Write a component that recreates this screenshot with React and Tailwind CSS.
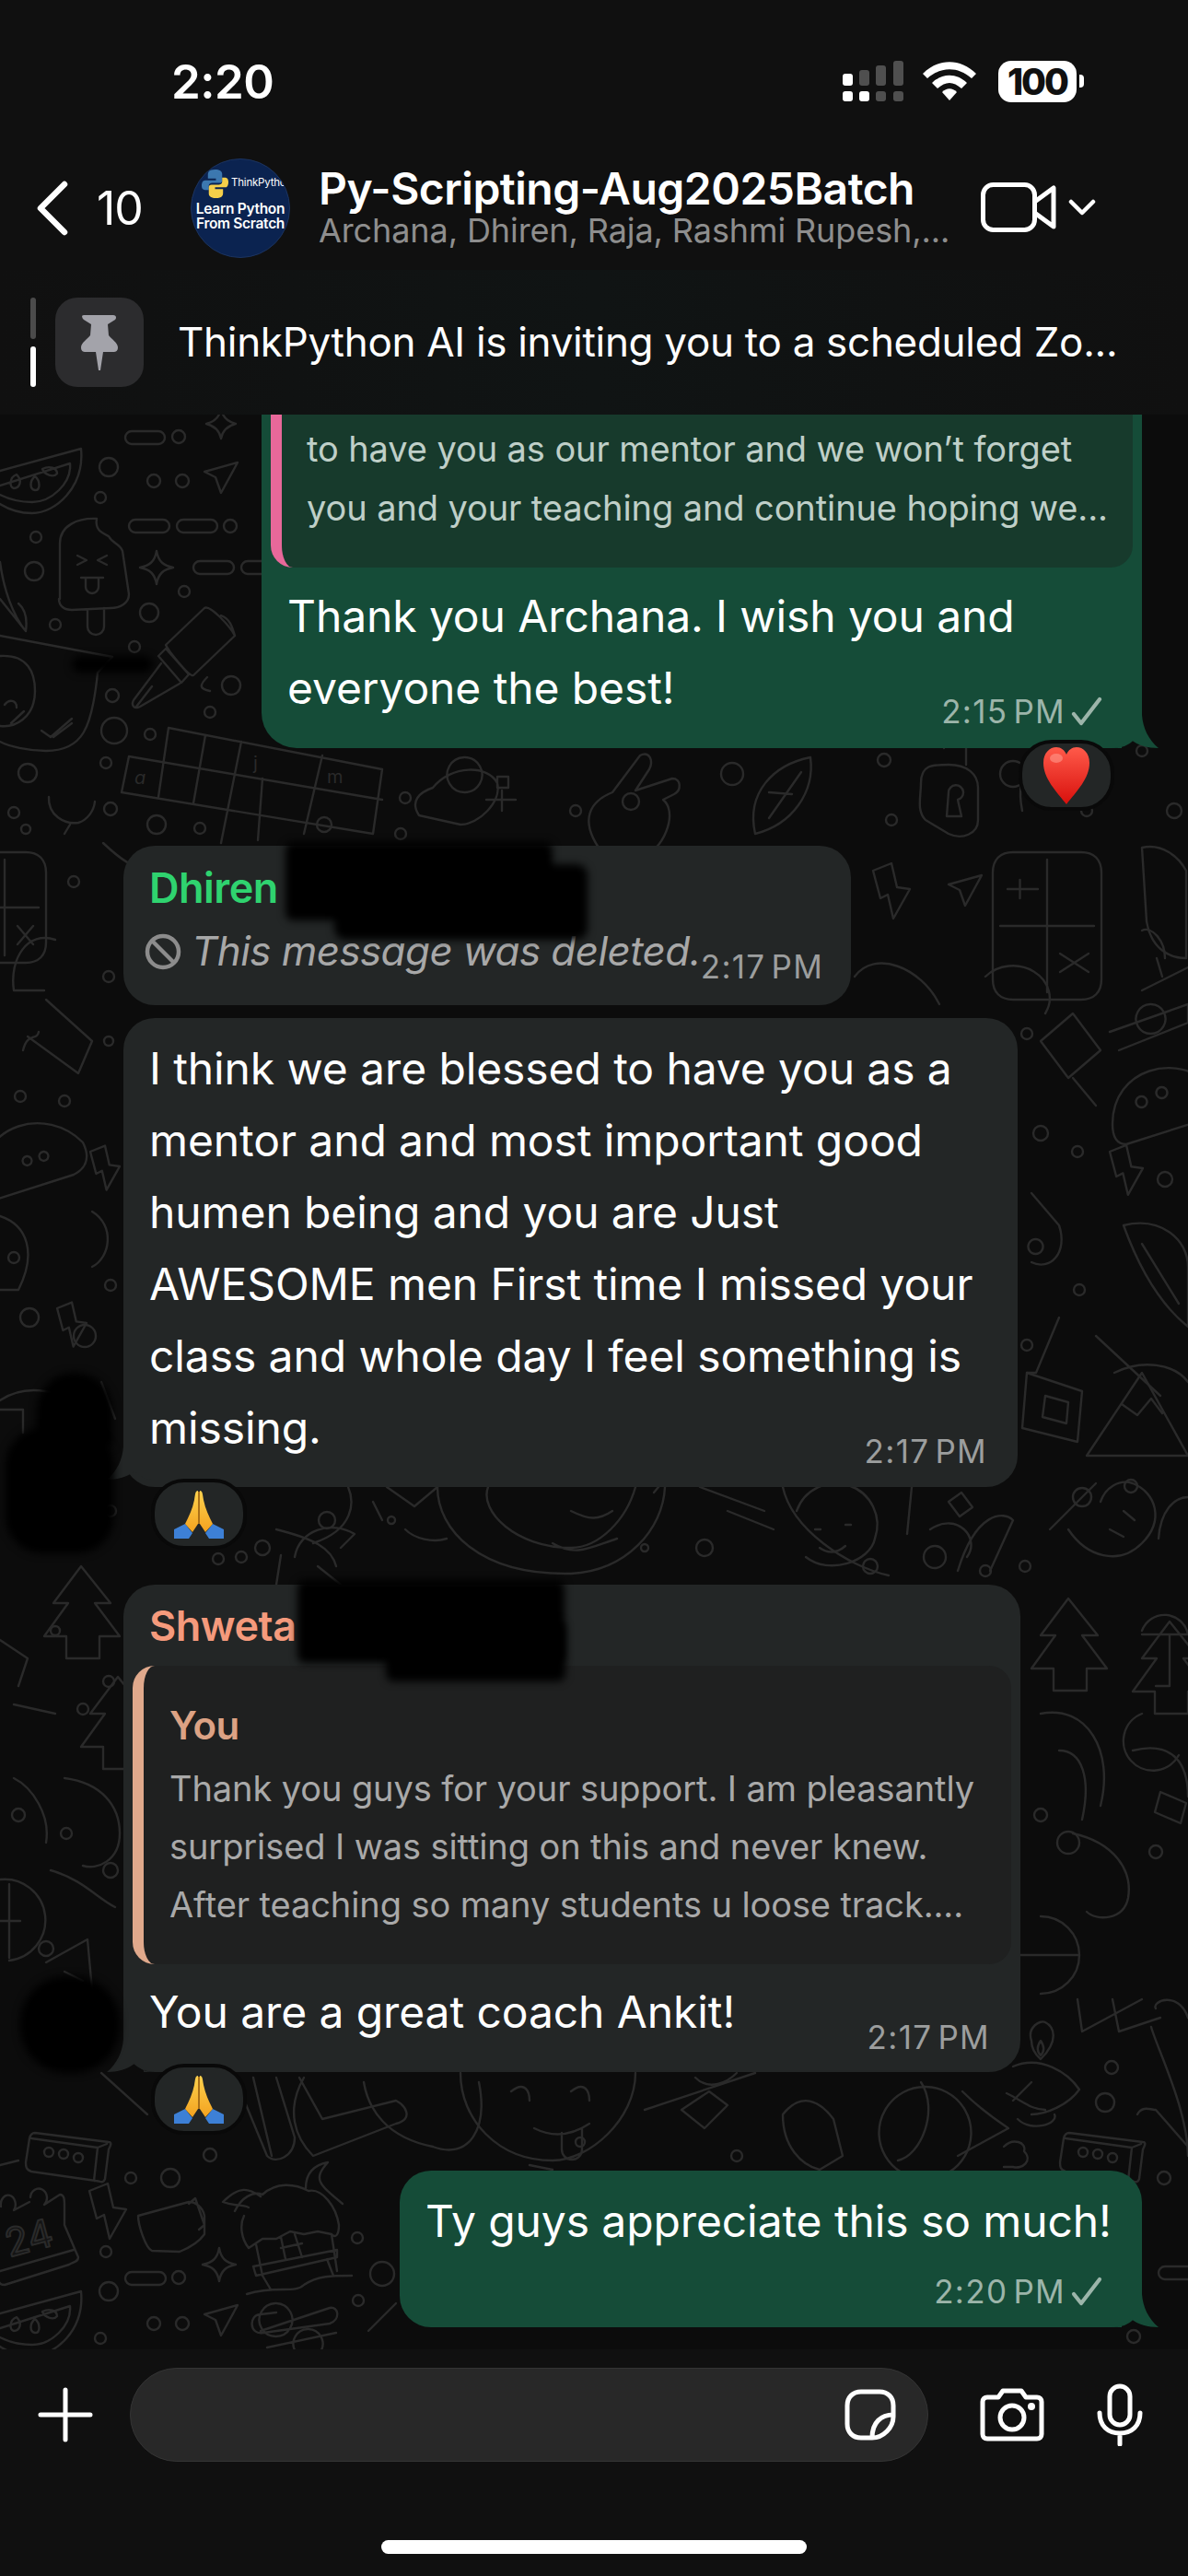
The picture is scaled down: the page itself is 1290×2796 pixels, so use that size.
import React from "react";

const melon = (x, y) => `M${x} ${y + 24} L${x + 88} ${y} C${x + 92} ${y + 42} ${x + 60} ${y + 70} ${x + 35} ${y + 70} C${x + 20} ${y + 70} ${x + 8} ${y + 65} ${x} ${y + 60} M${x} ${y + 40} L${x + 76} ${y + 16} C${x + 78} ${y + 38} ${x + 55} ${y + 58} ${x + 35} ${y + 58} C${x + 20} ${y + 58} ${x + 8} ${y + 54} ${x} ${y + 50} M${x + 18} ${y + 28} c-8 3 -8 14 -3 15 c6 0 10 -8 3 -15z M${x + 38} ${y + 30} c-6 5 -6 14 0 15 c6 0 6 -10 0 -15z M${x + 46} ${y + 22} c2 6 12 10 16 5 c0 -6 -8 -9 -16 -5z`;
const send = (x, y) => `M${x} ${y + 10} L${x + 36} ${y} L${x + 18} ${y + 33} L${x + 12} ${y + 16}Z`;
const spark = (x, y, r = 18) => `M${x} ${y - r} C${x + 2} ${y - 6} ${x + 8} ${y - 2} ${x + r} ${y} C${x + 8} ${y + 2} ${x + 2} ${y + 6} ${x} ${y + r} C${x - 2} ${y + 6} ${x - 8} ${y + 2} ${x - r} ${y} C${x - 8} ${y - 2} ${x - 2} ${y - 6} ${x} ${y - r}Z`;
const bolt = (x, y, s = 1) => `M${x} ${y} L${x + 20 * s} ${y - 8 * s} L${x + 26 * s} ${y + 18 * s} L${x + 40 * s} ${y + 20 * s} L${x + 22 * s} ${y + 52 * s} L${x + 16 * s} ${y + 26 * s} L${x + 8 * s} ${y + 30 * s}Z`;
const dots = (x, y) => `M${x + 8} ${y} L${x + 88} ${y + 10} C${x + 92} ${y + 10} ${x + 90} ${y + 14} ${x + 88} ${y + 18} L${x + 84} ${y + 50} C${x + 82} ${y + 56} ${x + 78} ${y + 52} ${x + 74} ${y + 52} L${x + 4} ${y + 42} C${x - 2} ${y + 40} ${x - 2} ${y + 36} ${x - 2} ${y + 32} L${x + 2} ${y + 6} C${x + 3} ${y + 2} ${x + 5} ${y} ${x + 8} ${y}Z M${x + 86} ${y + 12} L${x + 76} ${y + 16} L${x + 4} ${y + 6} M${x + 76} ${y + 16} L${x + 72} ${y + 52}`;
const taco = (x, y) => `M${x} ${y + 70} C${x} ${y + 10} ${x + 70} ${y - 10} ${x + 110} ${y + 30} C${x + 120} ${y + 50} ${x + 110} ${y + 60} ${x + 100} ${y + 65} L${x + 15} ${y + 92} C${x + 5} ${y + 92} ${x} ${y + 85} ${x} ${y + 70}Z`;
const mtn = (x, y) => `M${x} ${y + 90} L${x + 60} ${y} L${x + 110} ${y + 90}Z M${x + 38} ${y + 34} L${x + 55} ${y + 46} L${x + 70} ${y + 28} L${x + 82} ${y + 44}`;
const tree = (x, y) => `M${x + 40} ${y} L${x + 72} ${y + 40} L${x + 55} ${y + 40} L${x + 82} ${y + 76} L${x + 60} ${y + 76} L${x + 60} ${y + 100} L${x + 24} ${y + 100} L${x + 24} ${y + 76} L${x} ${y + 76} L${x + 26} ${y + 40} L${x + 10} ${y + 40}Z`;
const hand = (x, y) => `M${x + 10} ${y + 100} C${x - 10} ${y + 70} ${x} ${y + 50} ${x + 25} ${y + 40} L${x + 55} ${y} C${x + 65} ${y - 5} ${x + 70} ${y + 5} ${x + 65} ${y + 15} L${x + 50} ${y + 38} L${x + 90} ${y + 25} C${x + 100} ${y + 25} ${x + 100} ${y + 38} ${x + 92} ${y + 42} L${x + 80} ${y + 48} C${x + 95} ${y + 60} ${x + 85} ${y + 95} ${x + 60} ${y + 110} C${x + 40} ${y + 118} ${x + 22} ${y + 115} ${x + 10} ${y + 100}Z`;
const calc = (x, y, w, h) => `M${x + 22} ${y} H${x + w - 22} C${x + w - 8} ${y} ${x + w} ${y + 8} ${x + w} ${y + 22} V${y + h - 22} C${x + w} ${y + h - 8} ${x + w - 8} ${y + h} ${x + w - 22} ${y + h} H${x + 22} C${x + 8} ${y + h} ${x} ${y + h - 8} ${x} ${y + h - 22} V${y + 22} C${x} ${y + 8} ${x + 8} ${y} ${x + 22} ${y}Z M${x + 8} ${y + h / 2} H${x + w - 8} M${x + w / 2} ${y + 8} V${y + h - 8} M${x + 16} ${y + h / 4} H${x + w / 2 - 10} M${x + w / 4} ${y + h / 4 - 10} V${y + h / 4 + 10} M${x + w / 2 + 14} ${y + (h * 3) / 4 - 10} L${x + w - 14} ${y + (h * 3) / 4 + 10} M${x + w - 14} ${y + (h * 3) / 4 - 10} L${x + w / 2 + 14} ${y + (h * 3) / 4 + 10}`;

const PATHS = [
  melon(0, 487),
  send(222, 502),
  spark(170, 616), spark(240, 460, 16),
  "M65 650 V590 C65 570 85 562 105 563 C103 575 110 578 118 582 C122 590 130 590 133 598 L140 645 C140 655 130 660 120 660 L78 662 C70 662 64 658 64 650Z M95 662 V680 a9 9 0 0 0 18 0 V660 M84 603 L94 608 L84 613 M116 603 L106 608 L116 613 M88 627 H112 M93 627 v10 a7 7 0 0 0 14 0 v-10",
  "M0 610 C4 640 14 668 28 685 C30 670 26 660 20 655 M0 650 L28 685",
  "M180 700 L222 660 C228 656 250 680 255 690 L210 733 C205 735 182 705 180 700Z M172 712 L180 704 L205 732 L197 741Z M175 720 L145 760 C142 766 146 770 152 767 L195 742 M148 767 L165 745 M240 668 C250 672 252 680 255 690 M225 735 C215 745 218 748 228 750",
  "M0 690 L122 713 L106 730 C100 790 90 815 50 815 C30 815 10 810 0 805 M0 712 C30 710 38 730 38 750 C38 780 15 790 0 788 M45 793 L55 800 L78 780 M58 800 L78 785 M5 765 C10 758 18 760 18 768 M12 785 L26 772",
  "M183 790 L415 835 M140 821 L415 868 M132 860 L405 905 M140 821 L132 860 M183 790 L172 865 M223 798 L210 872 M262 805 L240 915 M285 845 L280 912 M350 820 L330 905 M415 835 L405 905",
  "M53 865 C52 885 70 895 85 893 C95 890 102 880 103 870 M76 895 L70 905",
  "M112 915 C128 930 145 945 170 945",
  "M470 855 C490 830 530 830 540 850 C545 870 520 895 500 895 L455 885 C445 870 455 860 470 855Z M505 822 a19 19 0 1 1 -1 0 M540 855 H552 V843 H540 Z M528 868 H560 M545 858 V880",
  hand(640, 820),
  "M820 905 C810 860 840 830 880 822 C885 860 860 895 820 905Z M835 888 L870 838 M835 860 L860 862",
  "M1000 850 C1000 830 1012 830 1030 830 C1050 830 1062 840 1062 855 V890 C1062 905 1045 912 1030 905 L1005 890 C995 880 1000 865 1000 850Z M1025 812 a12 12 0 0 1 24 0 V830 M1030 860 a8 8 0 1 1 10 8 l4 18 h-16 z",
  "M1110 880 C1100 830 1130 815 1165 820",
  bolt(948, 945), send(1030, 950),
  calc(1078, 925, 118, 160),
  "M1240 920 C1262 915 1280 930 1288 945 V1040 C1270 1040 1250 1030 1245 1000Z",
  "M1240 1010 C1250 1005 1265 1020 1265 1040 M1256 1040 L1262 1060",
  "M928 1060 C950 1030 1000 1050 1020 1090 M1070 1060 a40 35 0 0 1 65 40",
  "M1240 1075 L1290 1050 M1250 1090 a16 16 0 1 1 -1 0",
  calc(-40, 925, 90, 120),
  "M60 1020 C30 1010 10 1040 15 1075 M15 1075 H48",
  "M50 1085 L100 1130 L85 1165 L30 1125 M25 1140 C30 1120 40 1130 42 1120",
  taco(-20, 1210), "M30 1255 a5 5 0 1 1 -1 0 M48 1250 a5 5 0 1 1 -1 0",
  bolt(98, 1250, 0.8), "M100 1315 C125 1330 120 1365 100 1375",
  bolt(62, 1420, 0.8),
  "M0 1320 C30 1330 40 1360 20 1400 L-5 1400",
  "M0 1520 C30 1500 70 1510 90 1530 M0 1530 H25 V1555 M110 1500 L125 1540",
  tree(48, 1700), tree(88, 1820),
  "M0 1780 L30 1800 L20 1830 M15 1850 L60 1860",
  "M70 1930 C110 1935 130 1960 130 1990 C130 2020 105 2030 90 2025 M15 1930 C35 1940 55 1970 50 2000 M55 2030 C90 2040 105 2060 125 2070",
  "M0 2040 a44 44 0 0 1 10 88 M-5 2085 H22 M10 2045 V2125",
  "M50 2130 L95 2105 L100 2160 M70 2140 L90 2150",
  taco(1208, 1150), "M1240 1190 a6 6 0 1 1 -1 0 M1262 1180 a6 6 0 1 1 -1 0",
  "M1130 1130 L1165 1100 L1195 1140 L1160 1170Z M1165 1170 L1190 1200",
  bolt(1205, 1250, 0.9),
  "M1205 1120 L1290 1090 L1290 1110 L1215 1140",
  "M1120 1295 L1150 1330 C1160 1360 1140 1380 1120 1370 M1125 1345 a8 8 0 1 1 -1 0",
  "M1220 1330 C1260 1320 1290 1345 1290 1375 V1440 C1265 1420 1240 1385 1220 1330Z M1240 1350 L1280 1415",
  "M1210 1490 C1240 1475 1275 1480 1290 1500 M1150 1430 L1125 1490 H1115 M1190 1450 L1260 1515",
  mtn(1180, 1490),
  "M1115 1490 L1175 1510 L1170 1565 L1110 1550Z M1135 1515 L1160 1522 L1158 1545 L1132 1538Z",
  "M1140 1660 L1190 1610 M1160 1660 C1180 1690 1215 1700 1240 1675 C1265 1650 1255 1620 1230 1610 C1215 1605 1200 1615 1195 1630",
  "M1258 1670 C1260 1640 1275 1625 1290 1625 M1220 1640 L1232 1650 M1205 1660 L1220 1668",
  tree(1120, 1735), tree(1230, 1760),
  "M1240 1770 a26 26 0 0 1 50 4 H1240 M1270 1775 L1270 1830 H1255",
  "M1130 1860 C1180 1850 1210 1900 1195 1960 M1150 1900 C1175 1900 1185 1930 1175 1975 M1240 1860 a32 32 0 1 0 40 45",
  "M1230 1900 C1270 1890 1290 1910 1290 1950 M1165 1990 C1210 2000 1230 2030 1225 2060 C1220 2085 1190 2085 1180 2075",
  "M1260 1945 l28 12 l-6 22 l-28 -12z",
  "M1130 2080 a42 42 0 1 1 0 84 M1090 2122 H1170",
  "M1170 2170 L1175 2205 L1240 2170 M1208 2170 L1215 2205 L1260 2190",
  "M1120 2215 C1115 2200 1130 2192 1135 2195 C1145 2200 1150 2215 1130 2235 C1122 2228 1120 2222 1120 2215Z M1130 2215 c-4 6 -4 12 0 16 c4 -4 4 -10 0 -16z M1100 2243 C1130 2230 1160 2250 1172 2268 C1160 2285 1135 2295 1120 2295 M1105 2300 C1120 2315 1150 2305 1145 2295 M1093 2272 C1110 2280 1120 2290 1135 2290",
  "M1255 2180 C1250 2172 1280 2160 1290 2190 M1250 2200 C1255 2220 1290 2290 1290 2340 M1235 2295 C1240 2285 1250 2290 1255 2290 L1290 2330",
  dots(1153, 2315),
  "M1090 2330 C1100 2320 1115 2325 1112 2335 C1122 2345 1110 2355 1100 2352 H1090",
  "M378 1614 C385 1630 385 1660 340 1675 M300 1660 C340 1670 360 1680 365 1700 M475 1614 C475 1660 520 1710 620 1708 C680 1705 720 1660 722 1614 M530 1614 C520 1640 560 1680 620 1680 C650 1680 680 1650 690 1614 M405 1630 L415 1650 M440 1660 C450 1670 470 1675 485 1670 M620 1640 C640 1650 650 1650 665 1640 M600 1675 C625 1690 640 1680 670 1670",
  "M420 1614 L450 1635 L475 1614 M320 1690 C325 1660 360 1650 385 1665 L370 1680 M305 1688 L300 1720 M345 1700 L370 1720 M710 1620 L715 1614",
  "M760 1614 L830 1640 M790 1640 L840 1660 M850 1614 C860 1660 920 1700 965 1710",
  "M990 1614 L985 1665 M1010 1660 C1040 1640 1065 1670 1050 1690 M1040 1705 C1060 1640 1090 1640 1100 1650 L1075 1705",
  "M865 1640 a45 45 0 0 1 85 30 C945 1695 900 1710 875 1690 M885 1660 h6 M918 1655 h6 M890 1680 q14 10 28 -2",
  "M1030 1630 l14 -10 l12 16 l-14 10z",
  "M255 2255 L290 2340 C300 2350 320 2340 320 2320 L300 2255 M275 2255 L295 2340 M110 2250 L160 2295",
  "M330 2255 C310 2290 320 2320 340 2340 L430 2305 C450 2300 440 2285 430 2280 L350 2300 L325 2255",
  "M395 2260 C400 2290 420 2320 470 2330 M470 2330 C510 2345 530 2310 520 2260",
  "M500 2250 C500 2300 540 2345 600 2345 C640 2345 690 2300 690 2250 M555 2270 C570 2258 575 2270 575 2280 M620 2270 C635 2258 640 2270 640 2280 M580 2310 Q610 2325 640 2305 M610 2315 v18 a11 11 0 0 0 22 0 v-22",
  "M740 2290 L770 2270 L790 2285 L765 2310Z M755 2255 C770 2270 790 2260 800 2250",
  "M850 2295 C870 2270 890 2280 905 2300 L915 2340 L890 2355 C870 2350 850 2330 850 2295Z",
  "M1000 2260 C1020 2290 1000 2340 975 2345 M1005 2265 a50 50 0 1 1 -1 0",
  "M1045 2270 C1060 2285 1080 2300 1095 2310 L1040 2340 M1100 2280 L1120 2260",
  "M600 2355 L575 2350 M700 2290 L820 2250",
  dots(30, 2315),
  bolt(97, 2378, 1),
  "M1 2395 a8 10 0 1 1 14 4 L32 2390 M33 2385 a9 10 0 1 1 15 8 L65 2382 C70 2382 70 2388 70 2395 V2415 L85 2450 C85 2455 80 2455 75 2458 L5 2480 C0 2480 -2 2478 -2 2470 M0 2465 L80 2442",
  "M150 2405 L205 2390 C212 2390 220 2395 222 2405 L222 2425 C215 2435 205 2440 195 2444 L165 2443 C158 2440 150 2415 150 2405Z M205 2392 L212 2386 L222 2415 L216 2420",
  spark(238, 2458, 18),
  "M255 2400 C262 2385 275 2378 285 2382 C300 2368 320 2370 335 2378 C350 2375 365 2395 368 2415 C368 2425 365 2430 360 2425 L345 2422 L330 2425 L315 2422 L300 2430 L285 2430 L270 2440 C262 2430 260 2415 265 2405 M283 2384 C270 2375 260 2372 242 2390 C255 2395 262 2392 270 2396 M332 2375 C332 2360 340 2350 356 2347 C340 2365 345 2370 372 2392 M278 2436 L285 2470 M360 2425 L366 2465 M275 2460 L366 2442 L366 2450 L278 2470Z M305 2428 L310 2452 M320 2425 L328 2450 M305 2440 L328 2435 M285 2470 L294 2485 M355 2452 L362 2470 M268 2490 C300 2480 320 2490 330 2480 C345 2470 360 2470 382 2470",
  melon(0, 2487),
  send(222, 2502),
  "M283 2530 L358 2505 C368 2503 370 2518 358 2522 L286 2532 C270 2535 270 2512 283 2512 L300 2510 M300 2500 a18 18 0 1 1 -1 0 M290 2548 L365 2532 M335 2528 a16 16 0 1 1 -1 0",
  "M400 2530 L430 2500",
  "M0 2350 L20 2345",
];

const RINGS = [
  [118, 507, 10], [167, 522, 7], [198, 522, 7], [109, 540, 6], [194, 474, 7], [250, 571, 7], [39, 583, 6], [37, 620, 10], [60, 678, 6], [200, 642, 6], [162, 665, 10], [146, 702, 6], [122, 755, 7], [228, 773, 6], [251, 744, 10], [124, 793, 14], [163, 797, 6], [115, 828, 6], [30, 839, 10], [120, 878, 7], [15, 882, 6], [170, 895, 10], [217, 899, 6], [440, 866, 6], [435, 905, 6], [352, 895, 8], [625, 880, 6], [685, 870, 9], [795, 840, 12], [960, 825, 7], [1100, 840, 14], [1240, 815, 6], [1275, 880, 8], [968, 890, 6], [1180, 880, 6],
  [80, 957, 6], [28, 900, 5], [118, 1060, 6], [118, 1130, 5], [22, 1190, 6], [70, 1195, 6], [120, 1395, 6], [32, 1430, 10], [92, 1450, 12], [15, 1365, 6], [95, 1535, 6], [120, 1640, 6], [60, 1770, 5], [118, 1825, 6], [20, 1970, 7], [90, 1855, 6], [50, 2115, 8], [72, 1990, 6], [120, 2030, 8],
  [1115, 1122, 6], [1130, 1230, 8], [1170, 1250, 6], [1265, 1280, 8], [1115, 1460, 6], [1172, 1400, 6], [1175, 1625, 10], [1228, 1613, 7], [1113, 1700, 6], [1130, 1970, 7], [1160, 2000, 12], [1255, 2010, 7], [1207, 2244, 7], [1200, 2282, 10], [1264, 2364, 7], [1231, 2536, 7],
  [425, 1650, 4], [355, 1650, 9], [285, 1680, 8], [237, 1692, 6], [262, 1690, 6], [1015, 1690, 12], [945, 1700, 8], [1070, 1705, 6], [700, 1680, 4], [765, 1680, 9],
  [228, 2339, 7], [142, 2364, 6], [185, 2364, 10], [115, 2444, 6], [118, 2487, 10], [167, 2522, 7], [198, 2522, 7], [109, 2538, 6], [194, 2472, 7], [388, 2429, 6], [415, 2468, 13], [389, 2497, 6], [630, 2325, 5], [800, 2340, 6],
];

const PILLS = [
  [136, 468, 43], [140, 564, 44], [192, 564, 44], [210, 609, 44], [262, 609, 30], [136, 2466, 44], [1258, 2460, 40],
];

function Wallpaper() {
  return (
    <svg className="absolute inset-0" width="1290" height="2100" viewBox="0 450 1290 2100" fill="none" stroke="#2a2a2a" strokeWidth="2.4" strokeLinejoin="round" strokeLinecap="round">
      {PATHS.map((d, i) => <path key={i} d={d} />)}
      {RINGS.map(([x, y, r], i) => <circle key={i} cx={x} cy={y} r={r} />)}
      {PILLS.map(([x, y, w], i) => <rect key={i} x={x} y={y} width={w} height="14" rx="7" />)}
      <text x="146" y="851" fontSize="20" fill="#2a2a2a" stroke="none" fontStyle="italic">a</text>
      <text x="275" y="835" fontSize="20" fill="#2a2a2a" stroke="none">j</text>
      <text x="355" y="850" fontSize="20" fill="#2a2a2a" stroke="none">m</text>
      <text x="10" y="2450" fontSize="42" fill="#141414" stroke="#2a2a2a" strokeWidth="2" transform="rotate(-15 10 2450)">24</text>
      <circle cx="53" cy="2336" r="5" /><circle cx="69" cy="2338" r="5" /><circle cx="85" cy="2342" r="5" />
      <circle cx="1176" cy="2336" r="5" /><circle cx="1192" cy="2338" r="5" /><circle cx="1208" cy="2342" r="5" />
    </svg>
  );
}

function Check() {
  return (
    <svg width="34" height="32" viewBox="0 0 34 32" fill="none" stroke="#9cb5aa" strokeWidth="4.2" strokeLinecap="round" strokeLinejoin="round" className="ml-[6px]">
      <path d="M3 19 L11 29 L31 3" />
    </svg>
  );
}

function Time({ t, out, className = "" }) {
  return (
    <div className={`flex items-center shrink-0 text-[35px] leading-[40px] tracking-[1.3px] [word-spacing:-5px] ${out ? "text-[#9cb5aa]" : "text-[#9c9e9e]"} ${className}`}>
      <span>{t}</span>
      {out && <Check />}
    </div>
  );
}

function TailR() {
  return (
    <svg className="absolute right-[-18px] bottom-0 overflow-visible" width="40" height="36" viewBox="0 0 40 36" fill="#154c38">
      <path d="M22 0 C23 14 29 27 40 36 C28 36 18 33 10 27 C4 32 -2 36 -10 36 H0 V0Z" />
    </svg>
  );
}

function TailL({ className = "" }) {
  return (
    <svg className={`absolute left-[-18px] overflow-visible ${className}`} width="40" height="36" viewBox="0 0 40 36" fill="#232626">
      <path d="M18 0 C17 14 11 27 0 36 C12 36 22 33 30 27 C36 32 42 36 50 36 H40 V0Z" />
    </svg>
  );
}

function Heart() {
  return (
    <svg width="50" height="62" viewBox="0 0 50 62">
      <defs>
        <linearGradient id="heart" x1="0" y1="0" x2="0" y2="1">
          <stop offset="0" stopColor="#ff5a4a" />
          <stop offset="1" stopColor="#d8100c" />
        </linearGradient>
      </defs>
      <path d="M25 62 C14 48 0 34 0 17 C0 6 7 0 14 0 C19 0 23 3 25 8 C27 3 31 0 36 0 C43 0 50 6 50 17 C50 34 36 48 25 62Z" fill="url(#heart)" />
      <ellipse cx="14" cy="12" rx="7" ry="5" fill="#ff9a8c" opacity="0.6" />
    </svg>
  );
}

function Pray() {
  return (
    <svg width="54" height="52" viewBox="0 0 54 52">
      <defs>
        <linearGradient id="hand" x1="0" y1="0" x2="0" y2="1">
          <stop offset="0" stopColor="#fdd24e" />
          <stop offset="1" stopColor="#f3a21f" />
        </linearGradient>
      </defs>
      <path d="M0 52 V42 L12 36 L20 46 L16 52Z M54 52 V42 L42 36 L34 46 L38 52Z" fill="#3d80d6" />
      <path d="M26 0 C23 0 23 4 22 10 C20 20 16 28 12 36 L20 45 L26 36Z" fill="url(#hand)" />
      <path d="M28 0 C31 0 31 4 32 10 C34 20 38 28 42 36 L34 45 L28 36Z" fill="url(#hand)" />
      <path d="M27 1 V36" stroke="#d98a14" strokeWidth="1.5" />
    </svg>
  );
}

function Reaction({ side, children }) {
  return (
    <div className={`relative flex -mt-[9px] h-[77px] ${side === "r" ? "justify-end mr-[80px]" : "ml-[164px]"}`}>
      <div className="w-[104px] h-[77px] rounded-[36px] bg-[#232626] border-[4px] border-[#090909] flex items-center justify-center">{children}</div>
    </div>
  );
}

function Blob({ className }) {
  return <div className={`absolute bg-black blur-[4px] ${className}`} />;
}

function Avatar() {
  return (
    <div className="w-[108px] h-[108px] rounded-full bg-[#0b2350] border border-[#1c3460] flex flex-col items-center shrink-0 overflow-hidden text-white">
      <div className="flex items-center h-[38px] mt-[7px] pl-[11px] self-start">
        <svg width="29" height="31" viewBox="0 0 30 32" className="shrink-0">
          <path d="M15 0 C8 0 7 3 7 6 V10 H16 V12 H4 C1 12 0 15 0 18 C0 22 2 23 5 23 H8 V18 C8 16 10 15 12 15 H20 C22 15 23 14 23 12 V5 C23 2 20 0 15 0Z" fill="#3c78b0" />
          <path d="M16 32 C23 32 24 29 24 26 V22 H15 V20 H27 C29 20 30 17 30 14 C30 10 28 9 26 9 H23 V14 C23 16 21 17 19 17 H11 C9 17 8 18 8 20 V27 C8 30 11 32 16 32Z" fill="#f5cf4a" />
        </svg>
        <span className="text-[11.5px] leading-none whitespace-nowrap ml-[3px] tracking-[-0.2px]">ThinkPython</span>
      </div>
      <div className="text-[15.5px] leading-[16px] font-semibold text-center mt-[1px] tracking-[-0.3px] whitespace-nowrap">Learn Python<br />From Scratch</div>
    </div>
  );
}

export default function App() {
  return (
    <div className="relative w-[1290px] h-[2796px] flex flex-col overflow-hidden bg-[#0c0c0c] text-white font-[family-name:Inter]">
      <header className="bg-[#101010] shrink-0 z-10">
        <div className="h-[172px] pt-[4px] flex items-center justify-between pl-[186px] pr-[113px]">
          <span className="text-[51px] font-semibold leading-none tracking-[-0.5px]">2:20</span>
          <div className="flex items-center">
            <svg width="66" height="44" viewBox="0 0 66 44" fill="#fff">
              <rect x="0" y="14" width="11" height="13" rx="3" />
              <rect x="0" y="33" width="11" height="11" rx="3" />
              <rect x="18" y="33" width="11" height="11" rx="3" />
              <g fill="#4f4f4f">
                <rect x="18" y="10" width="11" height="17" rx="3" />
                <rect x="36" y="5" width="11" height="22" rx="3" />
                <rect x="55" y="0" width="11" height="27" rx="3" />
                <rect x="36" y="33" width="11" height="11" rx="3" />
                <rect x="55" y="33" width="11" height="11" rx="3" />
              </g>
            </svg>
            <svg width="58" height="42" viewBox="0 0 58 42" fill="#fff" className="ml-[21px]">
              <path d="M0 13 C17 -4 41 -4 58 13 L53 18 C38 5 20 5 5 18Z" />
              <path d="M10 23 C21 12 37 12 48 23 L42 29 C33 21 25 21 16 29Z" />
              <path d="M21 33 C26 28 32 28 37 33 L29 42Z" />
            </svg>
            <div className="ml-[24px] w-[85px] h-[45px] rounded-[14px] bg-white flex items-center justify-center text-[#101010] text-[39px] font-extrabold tracking-[-2px] leading-none">100</div>
            <div className="ml-[3px] w-[5px] h-[14px] bg-white rounded-r-[4px]" />
          </div>
        </div>
        <div className="h-[121px] pb-[13px] flex items-center pl-[40px]">
          <svg width="34" height="60" viewBox="0 0 34 60" fill="none" stroke="#fff" strokeWidth="6.5" strokeLinecap="round" strokeLinejoin="round" className="shrink-0">
            <path d="M30 4 L4 30 L30 56" />
          </svg>
          <span className="text-[50px] ml-[31px] w-[52px] tracking-[-1px] leading-none">10</span>
          <div className="ml-[50px]"><Avatar /></div>
          <div className="ml-[31px] w-[693px] min-w-0 -mt-[2px]">
            <div className="text-[48px] font-semibold leading-[50px] tracking-[-0.5px] whitespace-nowrap">Py-Scripting-Aug2025Batch</div>
            <div className="text-[36px] leading-[40px] text-[#8e8e8e] whitespace-nowrap tracking-[-0.1px]">Archana, Dhiren, Raja, Rashmi Rupesh,...</div>
          </div>
          <svg width="82" height="54" viewBox="0 0 82 54" fill="none" stroke="#fff" strokeWidth="5" strokeLinejoin="round" className="shrink-0 ml-[26px] -mt-[2px]">
            <rect x="2.5" y="2.5" width="56" height="49" rx="11" />
            <path d="M58.5 21 L79 6 V48 L58.5 33" />
          </svg>
          <svg width="30" height="18" viewBox="0 0 30 18" fill="none" stroke="#fff" strokeWidth="4.5" strokeLinecap="round" strokeLinejoin="round" className="ml-[13px] shrink-0 -mt-[2px]">
            <path d="M3 3 L15 15 L27 3" />
          </svg>
        </div>
        <div className="h-[157px] flex items-center pl-[33px] bg-gradient-to-r from-[#101010] via-[#101414] to-[#101010]">
          <div className="flex flex-col gap-[8px] w-[6px]">
            <div className="h-[45px] rounded-full bg-[#4b4b4b]" />
            <div className="h-[44px] rounded-full bg-white" />
          </div>
          <div className="ml-[21px] w-[96px] h-[97px] rounded-[24px] bg-[#2c2c2e] flex items-center justify-center">
            <svg width="40" height="60" viewBox="0 0 40 60" fill="#a3a3aa">
              <path d="M3 0 H35 C38 0 39 3 37 5 L29 10 L30 22 C33 26 40 30 40 35 C40 39 38 40 35 40 H24 L21 60 H19 L16 40 H5 C2 40 0 39 0 35 C0 30 7 26 10 22 L11 10 L3 5 C1 3 0 0 3 0Z" />
            </svg>
          </div>
          <div className="ml-[37px] text-[44px] leading-none whitespace-nowrap tracking-[-0.3px] -mt-[2px]">ThinkPython AI is inviting you to a scheduled Zo...</div>
        </div>
      </header>

      <main className="relative flex-1 min-h-0 overflow-hidden">
        <Wallpaper />
        <div className="relative flex flex-col text-[48px] leading-[78px] tracking-[-0.1px]">
          <div className="relative ml-[284px] w-[956px] h-[362px] bg-[#154c38] rounded-bl-[38px] rounded-br-[30px] px-[10px]">
            <div className="h-[166px] bg-[#173a2c] border-l-[12px] border-[#e8689a] rounded-b-[24px] pl-[27px] pt-[6px] text-[38px] leading-[63.5px] text-[#bfcfc8] whitespace-nowrap">
              <div>to have you as our mentor and we won’t forget</div>
              <div>you and your teaching and continue hoping we...</div>
            </div>
            <div className="pl-[18px] pr-[33px] pt-[14px]">
              <div>Thank you Archana. I wish you and</div>
              <div className="flex justify-between items-end">
                <span>everyone the best!</span>
                <Time t="2:15 PM" out className="-mb-[6px]" />
              </div>
            </div>
            <TailR />
          </div>
          <Reaction side="r"><Heart /></Reaction>

          <div className="relative mt-[38px] ml-[134px] w-[790px] h-[173px] bg-[#232626] rounded-[34px] pl-[28px] pr-[31px] pt-[18px]">
            <div className="text-[45px] leading-[56px] font-semibold text-[#2fd36f] tracking-[-0.5px]">Dhiren</div>
            <div className="flex items-center mt-[9px] h-[64px]">
              <svg width="40" height="40" viewBox="0 0 40 40" fill="none" stroke="#8c8c8c" strokeWidth="4.5" className="shrink-0 -ml-[5px]">
                <circle cx="20" cy="20" r="17" /><path d="M8 8 L32 32" />
              </svg>
              <span className="italic text-[44px] leading-[56px] text-[#a8a8a8] ml-[11px] whitespace-nowrap tracking-[-0.6px] -mt-[3px]">This message was deleted.</span>
              <Time t="2:17 PM" className="ml-auto mt-[32px]" />
            </div>
            <Blob className="left-[176px] top-[-4px] w-[290px] h-[85px] rounded-[8px]" />
            <Blob className="left-[229px] top-[20px] w-[275px] h-[82px] rounded-[12px]" />
          </div>

          <div className="relative mt-[14px] ml-[134px] w-[971px] h-[509px] bg-[#232626] rounded-[34px] pl-[28px] pr-[33px] pt-[16px] whitespace-nowrap">
            <div>I think we are blessed to have you as a</div>
            <div>mentor and and most important good</div>
            <div>humen being and you are Just</div>
            <div>AWESOME men First time I missed your</div>
            <div>class and whole day I feel something is</div>
            <div className="flex justify-between items-end">
              <span>missing.</span>
              <Time t="2:17 PM" className="-mb-[6px]" />
            </div>
            <TailL className="bottom-[8px]" />
          </div>
          <Reaction side="l"><Pray /></Reaction>

          <div className="relative mt-[38px] ml-[134px] w-[974px] h-[529px] bg-[#232626] rounded-[34px] px-[10px] pt-[17px]">
            <div className="pl-[18px] text-[45px] leading-[56px] font-semibold text-[#f59a7c] tracking-[-0.5px]">Shweta</div>
            <div className="mt-[15px] h-[324px] bg-[#1f2020] border-l-[12px] border-[#e0a98c] rounded-[24px] pl-[28px] pt-[37px] whitespace-nowrap">
              <div className="text-[42px] leading-[56px] font-semibold text-[#dca284] tracking-[-0.4px]">You</div>
              <div className="mt-[9px] text-[38px] leading-[63px] text-[#a9a9a9]">
                <div>Thank you guys for your support. I am pleasantly</div>
                <div>surprised I was sitting on this and never knew.</div>
                <div>After teaching so many students u loose track....</div>
              </div>
            </div>
            <div className="flex justify-between items-end pl-[18px] pr-[23px] mt-[13px]">
              <span>You are a great coach Ankit!</span>
              <Time t="2:17 PM" className="-mb-[8px]" />
            </div>
            <TailL className="bottom-0" />
            <Blob className="left-[189px] top-[-5px] w-[290px] h-[90px] rounded-[8px]" />
            <Blob className="left-[285px] top-[40px] w-[195px] h-[65px] rounded-[8px]" />
          </div>
          <Reaction side="l"><Pray /></Reaction>

          <div className="relative mt-[39px] ml-[434px] w-[806px] h-[170px] bg-[#154c38] rounded-[34px] rounded-br-[30px] pl-[28px] pr-[30px] pt-[16px] whitespace-nowrap">
            <div>Ty guys appreciate this so much!</div>
            <div className="flex justify-end mt-[17px] pr-[13px]">
              <Time t="2:20 PM" out />
            </div>
            <TailR />
          </div>
        </div>
        <Blob className="left-[78px] top-[262px] w-[88px] h-[18px] rounded-full bg-[#060606]" />
        <Blob className="left-[40px] top-[1040px] w-[82px] h-[80px] rounded-t-[40px]" />
        <Blob className="left-[6px] top-[1100px] w-[118px] h-[136px] rounded-[40px]" />
        <Blob className="left-[22px] top-[1695px] w-[108px] h-[105px] rounded-[50px]" />
      </main>

      <footer className="h-[246px] shrink-0 bg-[#101010] flex flex-col z-10">
        <div className="flex items-center h-[102px] mt-[20px] pl-[41px]">
          <svg width="60" height="60" viewBox="0 0 60 60" stroke="#fff" strokeWidth="5" strokeLinecap="round" className="shrink-0">
            <path d="M30 3 V57 M3 30 H57" />
          </svg>
          <div className="ml-[40px] w-[867px] h-[102px] rounded-[51px] bg-[#282828] border border-[#343434] flex items-center justify-end pr-[34px] shrink-0">
            <svg width="56" height="56" viewBox="0 0 56 56" fill="none" stroke="#fff" strokeWidth="5" strokeLinejoin="round">
              <path d="M18 3 H38 C47 3 53 9 53 18 V30 C53 42 42 53 30 53 H18 C9 53 3 47 3 38 V18 C3 9 9 3 18 3Z" />
              <path d="M53 28 C40 28 30 36 30 53" />
            </svg>
          </div>
          <svg width="70" height="58" viewBox="0 0 70 58" fill="none" stroke="#fff" strokeWidth="5" strokeLinejoin="round" className="ml-[56px] shrink-0">
            <path d="M8 10 H20 L25 3 H45 L50 10 H62 C65 10 67 12 67 15 V50 C67 53 65 55 62 55 H8 C5 55 3 53 3 50 V15 C3 12 5 10 8 10Z" />
            <circle cx="35" cy="32" r="13" />
            <circle cx="56" cy="20" r="1.5" fill="#fff" />
          </svg>
          <svg width="50" height="68" viewBox="0 0 50 68" fill="none" stroke="#fff" strokeWidth="5" strokeLinecap="round" className="ml-[57px] shrink-0">
            <rect x="14" y="3" width="22" height="42" rx="11" />
            <path d="M3 32 C3 46 12 54 25 54 C38 54 47 46 47 32 M25 54 V66" />
          </svg>
        </div>
        <div className="mt-[85px] mx-auto w-[462px] h-[15px] rounded-full bg-white" />
      </footer>
    </div>
  );
}
